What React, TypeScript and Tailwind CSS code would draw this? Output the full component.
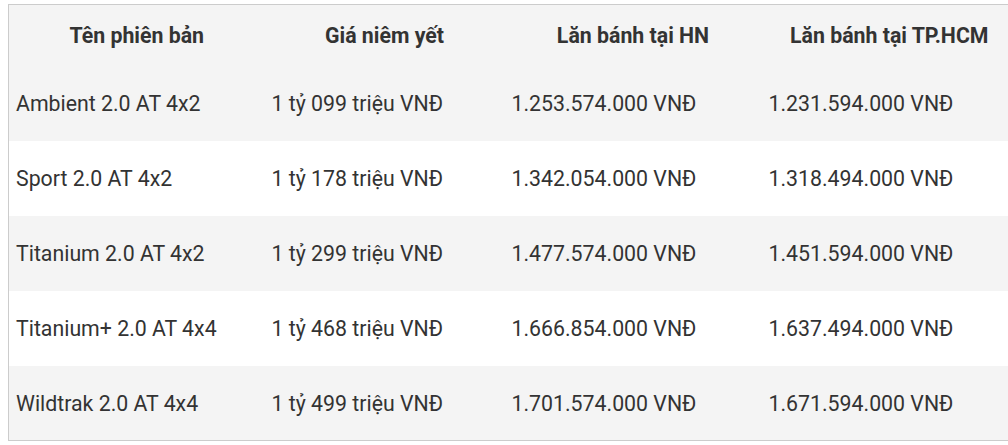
const rows = [
  ["Ambient 2.0 AT 4x2", "1 tỷ 099 triệu VNĐ", "1.253.574.000 VNĐ", "1.231.594.000 VNĐ"],
  ["Sport 2.0 AT 4x2", "1 tỷ 178 triệu VNĐ", "1.342.054.000 VNĐ", "1.318.494.000 VNĐ"],
  ["Titanium 2.0 AT 4x2", "1 tỷ 299 triệu VNĐ", "1.477.574.000 VNĐ", "1.451.594.000 VNĐ"],
  ["Titanium+ 2.0 AT 4x4", "1 tỷ 468 triệu VNĐ", "1.666.854.000 VNĐ", "1.637.494.000 VNĐ"],
  ["Wildtrak 2.0 AT 4x4", "1 tỷ 499 triệu VNĐ", "1.701.574.000 VNĐ", "1.671.594.000 VNĐ"],
];

const headers = ["Tên phiên bản", "Giá niêm yết", "Lăn bánh tại HN", "Lăn bánh tại TP.HCM"];
const widths = ["w-[256px]", "w-[240px]", "w-[257px]", "w-[256px]"];

export default function App() {
  return (
    <div className="w-[1008px] h-[445px] overflow-hidden bg-white pt-1 pl-2 font-['Roboto',sans-serif] text-[#333]">
      <table className="w-[1010px] table-fixed border-collapse border border-[#cccccc] text-[21.3px]">
        <colgroup>
          {widths.map((w, i) => (
            <col key={i} className={w} />
          ))}
        </colgroup>
        <thead>
          <tr className="h-[61px] bg-[#f4f4f4]">
            {headers.map((h) => (
              <th key={h} className="px-[7px] pt-[2px] text-center font-bold whitespace-nowrap">
                {h}
              </th>
            ))}
          </tr>
        </thead>
        <tbody>
          {rows.map((r, i) => (
            <tr key={i} className={`h-[75px] ${i % 2 === 0 ? "bg-[#f4f4f4]" : "bg-white"}`}>
              {r.map((c, j) => (
                <td key={j} className="px-[7px] pt-[2px] text-left whitespace-nowrap">
                  {c}
                </td>
              ))}
            </tr>
          ))}
        </tbody>
      </table>
    </div>
  );
}
